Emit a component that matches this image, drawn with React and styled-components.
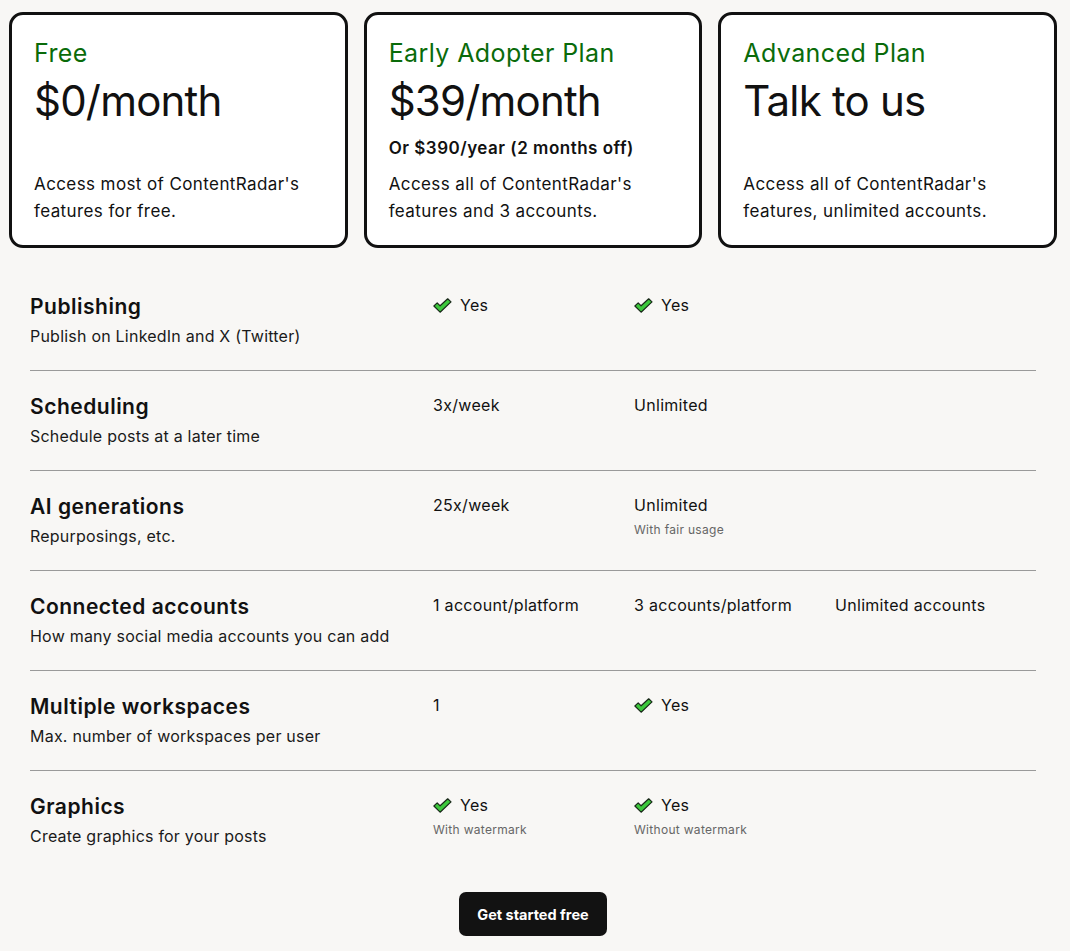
import styled, { createGlobalStyle } from "styled-components";

const GlobalStyle = createGlobalStyle`
  body {
    margin: 0;
    background: #f8f7f5;
    font-family: "Inter", "Liberation Sans", sans-serif;
    color: #111;
    letter-spacing: 0.3px;
  }
`;

const plans = [
  {
    name: "Free",
    price: "$0/month",
    desc: "Access most of ContentRadar's features for free.",
  },
  {
    name: "Early Adopter Plan",
    price: "$39/month",
    note: "Or $390/year (2 months off)",
    desc: "Access all of ContentRadar's features and 3 accounts.",
  },
  {
    name: "Advanced Plan",
    price: "Talk to us",
    desc: "Access all of ContentRadar's features, unlimited accounts.",
  },
];

const features = [
  {
    title: "Publishing",
    desc: "Publish on LinkedIn and X (Twitter)",
    values: [{ check: true, text: "Yes" }, { check: true, text: "Yes" }, null],
  },
  {
    title: "Scheduling",
    desc: "Schedule posts at a later time",
    values: [{ text: "3x/week" }, { text: "Unlimited" }, null],
  },
  {
    title: "AI generations",
    desc: "Repurposings, etc.",
    values: [{ text: "25x/week" }, { text: "Unlimited", sub: "With fair usage" }, null],
  },
  {
    title: "Connected accounts",
    desc: "How many social media accounts you can add",
    values: [
      { text: "1 account/platform" },
      { text: "3 accounts/platform" },
      { text: "Unlimited accounts" },
    ],
  },
  {
    title: "Multiple workspaces",
    desc: "Max. number of workspaces per user",
    values: [{ text: "1" }, { check: true, text: "Yes" }, null],
  },
  {
    title: "Graphics",
    desc: "Create graphics for your posts",
    values: [
      { check: true, text: "Yes", sub: "With watermark" },
      { check: true, text: "Yes", sub: "Without watermark" },
      null,
    ],
  },
];

const Check = () => (
  <svg width="19" height="15" viewBox="0 0 19 15">
    <path
      d="M0.9 8 L4.2 4.9 L7.1 7.8 L14.7 0.8 L18 3.9 L7.1 14.2 Z"
      fill="#3cc83c"
      stroke="#1a2a1a"
      strokeWidth="1.2"
      strokeLinejoin="round"
    />
  </svg>
);

const App = () => {
  return (
    <>
      <GlobalStyle />
      <Page>
        <Cards>
          {plans.map((p) => (
            <Card key={p.name}>
              <PlanName>{p.name}</PlanName>
              <Price>{p.price}</Price>
              {p.note && <Note>{p.note}</Note>}
              <CardDesc>{p.desc}</CardDesc>
            </Card>
          ))}
        </Cards>

        <Table>
          {features.map((f, i) => (
            <Row key={f.title} last={i === features.length - 1}>
              <div>
                <FeatureTitle>{f.title}</FeatureTitle>
                <FeatureDesc>{f.desc}</FeatureDesc>
              </div>
              {f.values.map((v, j) => (
                <Cell key={j}>
                  {v && (
                    <>
                      <Value>
                        {v.check && <Check />}
                        {v.text}
                      </Value>
                      {v.sub && <Sub>{v.sub}</Sub>}
                    </>
                  )}
                </Cell>
              ))}
            </Row>
          ))}
        </Table>

        <Footer>
          <StartButton>Get started free</StartButton>
        </Footer>
      </Page>
    </>
  );
};

export default App;

const Page = styled.div`
  width: 1048px;
  padding: 12px 13px 14px 9px;
`;

const Cards = styled.div`
  display: grid;
  grid-template-columns: repeat(3, 1fr);
  gap: 16px;
`;

const Card = styled.div`
  background: #fff;
  border: 3px solid #111;
  border-radius: 14px;
  height: 236px;
  box-sizing: border-box;
  padding: 22px 22px 20px;
  display: flex;
  flex-direction: column;
`;

const PlanName = styled.div`
  color: #0a6b0a;
  font-size: 25px;
  line-height: 32px;
  letter-spacing: 0.4px;
`;

const Price = styled.div`
  font-size: 42px;
  line-height: 52px;
  font-weight: 400;
  letter-spacing: -0.8px;
  margin-top: 6px;
`;

const Note = styled.div`
  font-size: 17px;
  font-weight: 600;
  line-height: 24px;
  letter-spacing: 0.5px;
  margin-top: 9px;
`;

const CardDesc = styled.div`
  margin-top: auto;
  font-size: 17px;
  line-height: 27px;
  letter-spacing: 0.4px;
`;

const Table = styled.div`
  margin: 23px 21px 0;
`;

const Row = styled.div`
  display: grid;
  grid-template-columns: 403px 201px 201px 201px;
  height: 100px;
  box-sizing: border-box;
  padding-top: 21px;
  border-bottom: ${({ last }) => (last ? "none" : "1.5px solid #9a9a9a")};
`;

const FeatureTitle = styled.div`
  font-size: 21px;
  font-weight: 600;
  line-height: 30px;
  letter-spacing: 0.5px;
`;

const FeatureDesc = styled.div`
  font-size: 16px;
  line-height: 26px;
  margin-top: 1px;
  letter-spacing: 0.22px;
  color: #1a1a1a;
`;

const Cell = styled.div`
  display: flex;
  flex-direction: column;
`;

const Value = styled.div`
  display: flex;
  align-items: center;
  gap: 8px;
  font-size: 16px;
  line-height: 27px;
`;

const Sub = styled.div`
  font-size: 12px;
  line-height: 21px;
  color: #666;
`;

const Footer = styled.div`
  display: flex;
  justify-content: center;
  margin-top: 21px;
`;

const StartButton = styled.button`
  all: unset;
  background: #121212;
  color: #fff;
  font-family: "Inter", "Liberation Sans", sans-serif;
  font-size: 14.5px;
  font-weight: 700;
  letter-spacing: 0;
  height: 44px;
  padding: 0 18px;
  border-radius: 7px;
  display: flex;
  align-items: center;
  cursor: pointer;
`;
